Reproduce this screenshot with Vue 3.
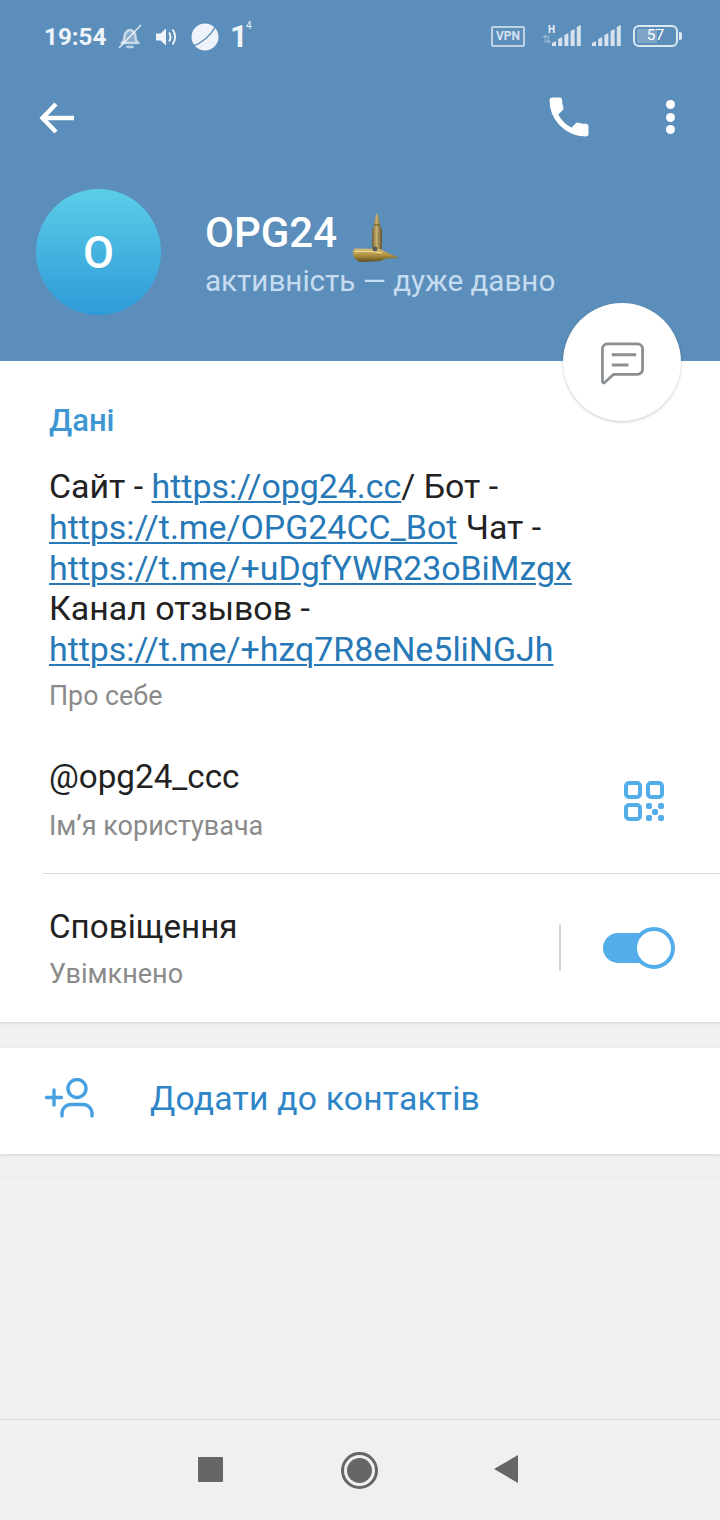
<script setup>
const heights = [4, 8, 12, 16, 20]
const bars = heights.map((h, i) => {
  const x = i * 6.2
  const w = 4
  return `${x},21 ${x + w},21 ${x + w},${21 - h - 1} ${x},${21 - h + 1}`
})
</script>

<template>
  <div class="screen">
    <header class="hero">
      <div class="status">
        <div class="status-left">
          <span class="time">19:54</span>
          <svg class="bell" width="28" height="26" viewBox="0 0 28 26">
            <path d="M5.500 19c2.200-1.500 3-3.500 3-6.500 0-3.500 2.500-6.500 5.500-6.500s5.500 3 5.500 6.500c0 3 .8 5 3 6.500z" fill="#fff" fill-opacity=".28" stroke="#fff" stroke-opacity=".6" stroke-width="2.400" stroke-linejoin="round"/>
            <path d="M11.500 23h5" stroke="#fff" stroke-opacity=".6" stroke-width="2.600" stroke-linecap="round"/>
            <path d="M3 24 25 1" stroke="#fff" stroke-opacity=".75" stroke-width="1.800"/>
          </svg>
          <svg class="speaker" width="22" height="20" viewBox="0 0 22 20">
            <path d="M0 6.500h4.500L10 1.500v17l-5.500-5H0z" fill="#eef4fa"/>
            <path d="M13 5.500c2 2.500 2 6.500 0 9" fill="none" stroke="#eef4fa" stroke-width="2"/>
            <path d="M16.500 2.500c3.500 4.500 3.500 10.500 0 15" fill="none" stroke="#eef4fa" stroke-width="2"/>
          </svg>
          <svg class="planet" width="28" height="28" viewBox="0 0 28 28">
            <circle cx="14" cy="14" r="13.500" fill="#eef4fa"/>
            <path d="M1 23.500C11 20 20 12 25.500 2" fill="none" stroke="#5b8eba" stroke-width="1.500"/>
          </svg>
          <span class="one">1<sup>4</sup></span>
        </div>
        <div class="status-right">
          <span class="vpn">VPN</span>
          <div class="sig sig-h">
            <span class="h">H</span>
            <span class="arrows">⇅</span>
            <svg width="30" height="22" viewBox="0 0 30 22">
              <polygon v-for="(p, i) in bars" :key="i" :points="p" fill="#fff" fill-opacity=".75"/>
            </svg>
          </div>
          <svg class="sig2" width="30" height="22" viewBox="0 0 30 22">
            <polygon v-for="(p, i) in bars" :key="i" :points="p" fill="#fff" fill-opacity=".75"/>
          </svg>
          <div class="battery">
            <div class="bat-body"><i class="bat-fill"></i><span>57</span></div>
            <i class="bat-tip"></i>
          </div>
        </div>
      </div>

      <div class="toolbar">
        <svg width="36" height="32" viewBox="0 0 36 32">
          <path d="M35 16H4M17 2 3.500 16 17 30" fill="none" stroke="#fff" stroke-width="4.400"/>
        </svg>
        <div class="toolbar-right">
          <svg class="phone" width="40" height="40" viewBox="2.500 2.500 19 19">
            <path d="M6.620 10.790c1.440 2.830 3.760 5.140 6.590 6.590l2.200-2.200c.27-.27.67-.36 1.020-.24 1.120.37 2.330.57 3.570.57.550 0 1 .45 1 1V20c0 .55-.45 1-1 1-9.390 0-17-7.610-17-17 0-.55.45-1 1-1h3.500c.55 0 1 .45 1 1 0 1.250.2 2.450.57 3.570.11.35.03.74-.25 1.020l-2.200 2.200z" fill="#fff" stroke="#fff" stroke-width=".5" stroke-linejoin="round"/>
          </svg>
          <div class="dots"><i></i><i></i><i></i></div>
        </div>
      </div>

      <div class="profile">
        <div class="avatar">O</div>
        <div class="who">
          <div class="name-row">
            <span class="name">OPG24</span>
            <svg class="bullet" width="48" height="50" viewBox="0 0 48 50">
              <defs>
                <linearGradient id="brass" x1="0" y1="0" x2="0" y2="1">
                  <stop offset="0" stop-color="#d9c070"/>
                  <stop offset=".55" stop-color="#a88c3c"/>
                  <stop offset="1" stop-color="#5c4a1c"/>
                </linearGradient>
                <linearGradient id="case" x1="0" y1="0" x2="1" y2="0">
                  <stop offset="0" stop-color="#6e5f38"/>
                  <stop offset=".45" stop-color="#c9b06a"/>
                  <stop offset="1" stop-color="#5f5230"/>
                </linearGradient>
              </defs>
              <path d="M25 0c1.500 3 2.500 7 3 12l2 5v21H20V17l2-5c.3-5 1.500-9 3-12z" fill="url(#case)"/>
              <path d="M22 12h6" stroke="#5e4e2a" stroke-width="1"/>
              <path d="M1 37.500 3 35.500l25 .5 7 3.500 12.500 5.500-13 .5-6 2.500-19 1c-3 0-7-3-8-6-.6-2-.8-4-.5-5.500z" fill="url(#brass)"/>
              <path d="M3 38.500c9-.5 18-.5 27 1.500" stroke="#f0e2a8" stroke-width="1.200" fill="none"/>
              <circle cx="23" cy="36" r="2.400" fill="#55585a"/>
            </svg>
          </div>
          <div class="seen">активність — дуже давно</div>
        </div>
      </div>

      <button class="fab" aria-label="Повідомлення">
        <svg width="47" height="47" viewBox="0 0 48 48">
          <path d="M3.500 9A5 5 0 0 1 8.500 4h31a5 5 0 0 1 5 5v21a5 5 0 0 1-5 5H15l-9.200 8.500c-.8.7-2.300.3-2.300-1z" fill="none" stroke="#8b8f92" stroke-width="2.800" stroke-linejoin="round"/>
          <path d="M13 15h25M13 25.500h17" stroke="#8b8f92" stroke-width="3"/>
        </svg>
      </button>
    </header>

    <section class="card info">
      <h2 class="heading">Дані</h2>
      <div class="bio">
        Сайт - <a>https://opg24.cc</a>/ Бот -<br>
        <a>https://t.me/OPG24CC_Bot</a> Чат -<br>
        <a>https://t.me/+uDgfYWR23oBiMzgx</a><br>
        Канал отзывов -<br>
        <a>https://t.me/+hzq7R8eNe5liNGJh</a>
      </div>
      <div class="sub sub-bio">Про себе</div>

      <div class="row row-user">
        <div>
          <div class="main">@opg24_ccc</div>
          <div class="sub">Ім’я користувача</div>
        </div>
        <svg class="qr" width="42" height="42" viewBox="0 0 42 42">
          <g fill="none" stroke="#52ade9" stroke-width="4">
            <rect x="3" y="3" width="14" height="14" rx="3"/>
            <rect x="25" y="3" width="14" height="14" rx="3"/>
            <rect x="3" y="25" width="14" height="14" rx="3"/>
          </g>
          <g fill="#52ade9">
            <rect x="23" y="23" width="6" height="6" rx="2"/>
            <rect x="35" y="23" width="6" height="6" rx="2"/>
            <rect x="29" y="29" width="6" height="6" rx="2"/>
            <rect x="23" y="35" width="6" height="6" rx="2"/>
            <rect x="35" y="35" width="6" height="6" rx="2"/>
          </g>
        </svg>
      </div>

      <div class="divider"></div>

      <div class="row row-notify">
        <div>
          <div class="main">Сповіщення</div>
          <div class="sub sub-notify">Увімкнено</div>
        </div>
        <div class="notify-right">
          <i class="vline"></i>
          <div class="switch"><i class="knob"></i></div>
        </div>
      </div>
    </section>

    <section class="card add">
      <svg width="52" height="42" viewBox="0 0 52 42">
        <g fill="none" stroke="#46a0e2" stroke-width="3.400" stroke-linecap="round">
          <circle cx="33" cy="10.500" r="9"/>
          <path d="M18 38v-2.500a9 9 0 0 1 9-9h12a9 9 0 0 1 9 9v2.500"/>
          <path d="M2.500 19.500h15M10 12v15"/>
        </g>
      </svg>
      <span class="add-text">Додати до контактів</span>
    </section>

    <div class="rest">
      <div class="rest-line"></div>
    </div>

    <nav class="navbar">
      <i class="nav-square"></i>
      <div class="nav-home"><i></i></div>
      <i class="nav-back"></i>
    </nav>
  </div>
</template>

<style>
html, body { margin: 0; padding: 0; background: #f0f0f0; }
</style>

<style scoped>
.screen {
  width: 720px;
  height: 1520px;
  display: flex;
  flex-direction: column;
  background: #f0f0f0;
  font-family: Roboto, "Noto Sans", sans-serif;
  overflow: hidden;
  color: #222;
}
.hero {
  position: relative;
  height: 361px;
  flex: none;
  background: #5b8eba;
  box-sizing: border-box;
  color: #fff;
}
.status {
  height: 74px;
  box-sizing: border-box;
  padding: 22px 38px 0 44px;
  display: flex;
  justify-content: space-between;
  align-items: flex-start;
}
.status-left { display: flex; align-items: center; height: 30px; color: #eef4fa; }
.time { font-size: 24.200px; font-weight: 700; width: 72px; }
.bell { margin-left: 0; }
.speaker { margin-left: 12px; }
.planet { margin-left: 13px; }
.one { font-size: 31px; font-weight: 700; margin-left: 11px; position: relative; line-height: 30px; }
.one sup { position: absolute; left: 16px; top: -3px; font-size: 10px; line-height: 14px; font-weight: 400; }
.status-right { display: flex; align-items: flex-start; height: 48px; }
.vpn {
  box-sizing: border-box;
  width: 34px;
  height: 21px;
  margin: 4px 0 0 0;
  border: 2px solid rgba(255,255,255,.6);
  border-radius: 2px;
  font-size: 12px;
  font-weight: 700;
  line-height: 17px;
  text-align: center;
  color: rgba(255,255,255,.75);
}
.sig-h { position: relative; width: 41px; height: 25px; margin-left: 16px; box-sizing: border-box; }
.sig-h svg { position: absolute; left: 11px; top: 3px; }
.h { position: absolute; left: 7px; top: 3px; font-size: 10px; font-weight: 700; line-height: 10px; color: #eef4fa; }
.arrows { position: absolute; left: 1px; top: 12px; font-size: 11px; line-height: 12px; color: rgba(255,255,255,.45); }
.sig2 { margin: 3px 0 0 10px; }
.battery { display: flex; align-items: center; margin: 3px 0 0 11px; height: 22px; }
.bat-body {
  position: relative;
  box-sizing: border-box;
  width: 45px;
  height: 22px;
  border: 2.500px solid rgba(255,255,255,.8);
  border-radius: 6px;
  text-align: center;
  font-size: 15.500px;
  line-height: 17px;
  color: #fff;
}
.bat-body span { position: relative; }
.bat-fill { position: absolute; left: 2px; top: 2px; bottom: 2px; width: 20px; background: rgba(255,255,255,.22); border-radius: 1px; }
.bat-tip { width: 3px; height: 8px; margin-left: 1px; background: rgba(255,255,255,.8); border-radius: 0 2px 2px 0; }

.toolbar {
  height: 88px;
  padding: 0 39px;
  box-sizing: border-box;
  display: flex;
  align-items: center;
  justify-content: space-between;
}
.toolbar svg { display: block; }
.toolbar-right { display: flex; align-items: center; gap: 77px; padding-right: 6px; }
.phone { margin-top: -3px; }
.dots { display: flex; flex-direction: column; gap: 3.500px; margin-top: -2px; }
.dots i { width: 9px; height: 9px; border-radius: 50%; background: #fff; }

.profile {
  display: flex;
  align-items: center;
  padding: 27px 0 0 36px;
}
.avatar {
  width: 125px;
  height: 126px;
  border-radius: 50%;
  background: linear-gradient(180deg, #5ccde8, #2e9ad8);
  display: flex;
  align-items: center;
  justify-content: center;
  font-size: 45px;
  font-weight: 500;
  color: #fff;
}
.who { margin-left: 44px; margin-top: -3px; }
.name-row { display: flex; align-items: flex-end; height: 52px; }
.name { font-size: 42px; font-weight: 500; line-height: 48px; color: #fff; position: relative; top: 2px; }
.bullet { margin: 0 0 -8px 15px; flex: none; }
.seen { font-size: 29.600px; line-height: 36px; color: #c6dcf0; margin-top: 8px; }

.fab {
  position: absolute;
  left: 563px;
  top: 303px;
  width: 118px;
  height: 118px;
  padding: 0;
  border: none;
  border-radius: 50%;
  background: #fff;
  box-shadow: 0 1px 3px rgba(0,0,0,.22);
  display: flex;
  align-items: center;
  justify-content: center;
  z-index: 2;
}
.fab svg { margin-top: 2px; }

.card { background: #fff; box-shadow: 0 1px 3px rgba(0,0,0,.12); flex: none; }
.info { height: 661px; box-sizing: border-box; padding: 42px 0 0 0; }
.heading {
  margin: 0;
  padding-left: 49px;
  font-size: 31px;
  line-height: 36px;
  font-weight: 500;
  color: #3e96d2;
}
.bio {
  margin-top: 28px;
  padding-left: 49px;
  font-size: 33.900px;
  line-height: 40.750px;
  color: #222;
}
.bio a { color: #2678b6; text-decoration: underline; text-underline-offset: 3px; text-decoration-thickness: 2px; }
.main { font-size: 33.200px; line-height: 40px; color: #222; }
.sub { font-size: 27px; line-height: 32px; color: #8a8a8a; margin-top: 13px; }
.sub-bio { padding-left: 49px; margin-top: 9px; font-size: 26.800px; }
.sub-notify { margin-top: 11px; }
.row { display: flex; justify-content: space-between; align-items: center; padding-left: 49px; }
.row-user { height: 105px; margin-top: 35px; padding-right: 55px; }
.qr { margin-top: 3px; }
.divider { height: 1px; margin: 21px 0 0 43px; background: #d9d9d9; }
.row-notify { height: 103px; margin-top: 23px; padding-right: 45px; }
.notify-right { display: flex; align-items: center; gap: 42px; margin-top: -1px; }
.vline { width: 2px; height: 47px; background: #d5d5d5; }
.switch {
  position: relative;
  width: 62px;
  height: 30px;
  border-radius: 15px;
  background: #52ade9;
  margin-right: 10px;
}
.knob {
  position: absolute;
  right: -10px;
  top: -6px;
  width: 42px;
  height: 42px;
  box-sizing: border-box;
  border: 4px solid #52ade9;
  border-radius: 50%;
  background: #fff;
}

.add {
  margin-top: 26px;
  height: 106px;
  display: flex;
  align-items: center;
  padding-left: 44px;
}
.add svg { margin-top: -4px; }
.add-text { margin-left: 54px; font-size: 33.700px; color: #2e86c8; letter-spacing: .2px; margin-top: -5px; }

.rest { flex: 1; padding-top: 23px; }
.rest-line { height: 1px; background: #eaeaea; }

.navbar {
  flex: none;
  height: 101px;
  box-sizing: border-box;
  border-top: 1px solid #d8d8d8;
  background: #f0f0f0;
  display: flex;
  align-items: center;
  padding: 0 0 0 198px;
}
.nav-square { width: 25px; height: 25px; background: #666; border-radius: 1px; margin-top: -2px; }
.nav-home {
  margin-left: 118px;
  width: 37px;
  height: 37px;
  box-sizing: border-box;
  border: 3px solid #666;
  border-radius: 50%;
  display: flex;
  align-items: center;
  justify-content: center;
}
.nav-home i { width: 25px; height: 25px; border-radius: 50%; background: #666; }
.nav-back {
  margin-left: 116px;
  width: 0;
  height: 0;
  border-top: 14px solid transparent;
  border-bottom: 14px solid transparent;
  border-right: 24px solid #666;
  margin-top: -2px;
}
</style>
